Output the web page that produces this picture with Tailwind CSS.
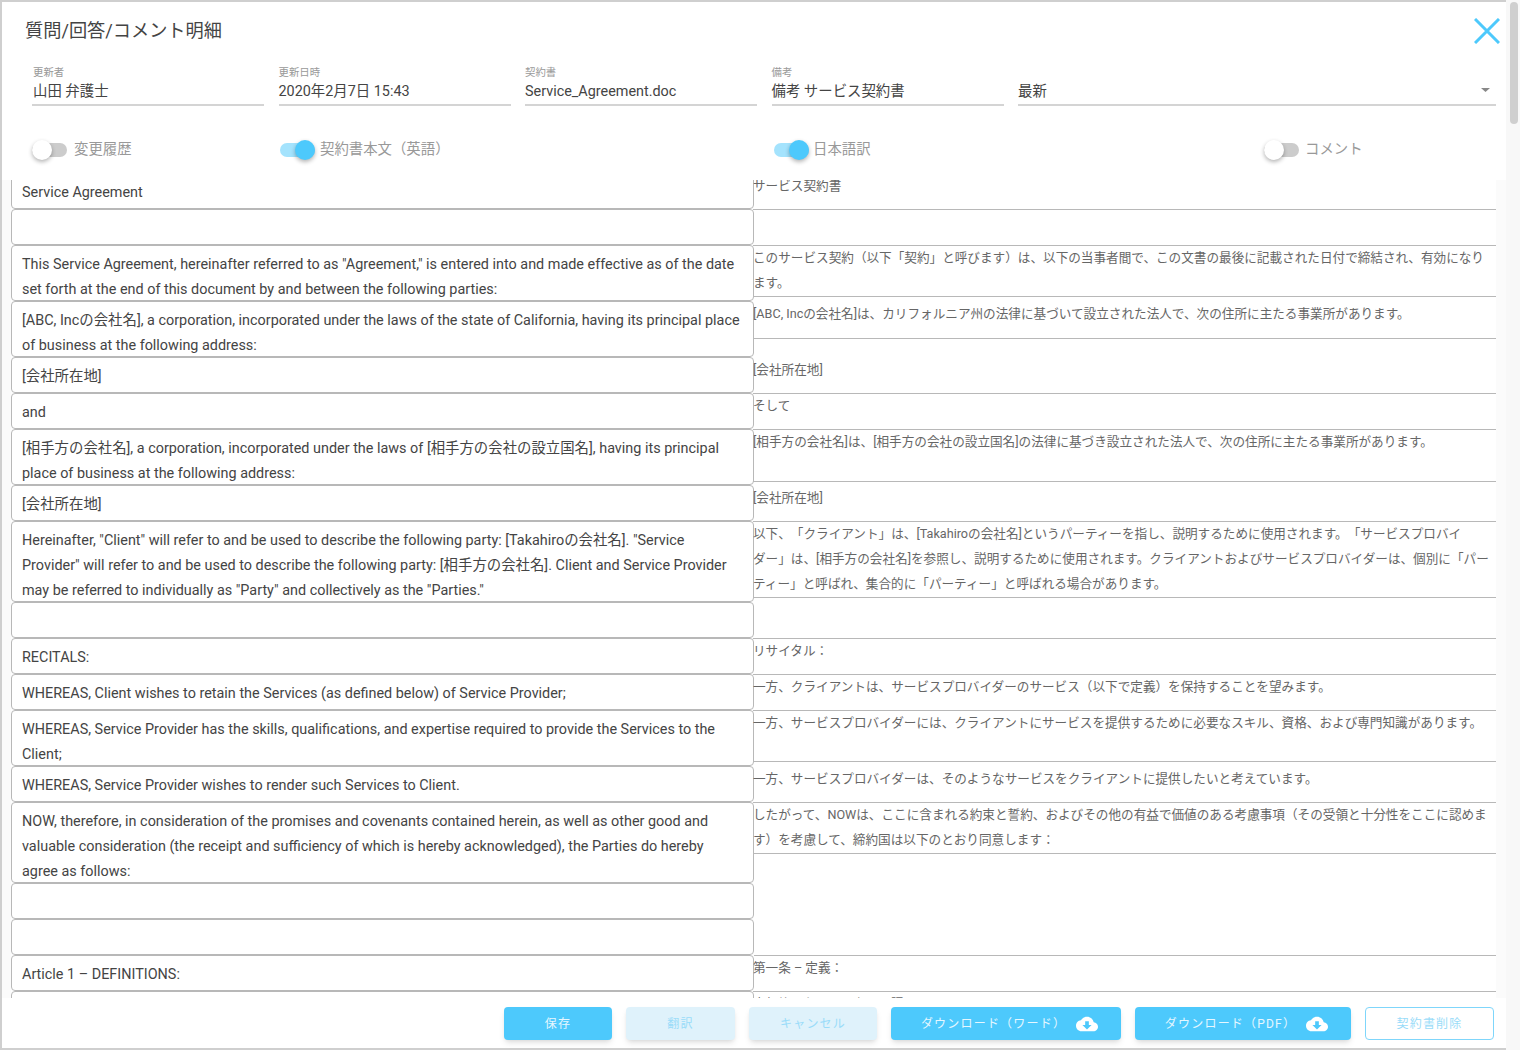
<!DOCTYPE html>
<html lang="ja">
<head>
    <meta charset="UTF-8">
    <title>質問/回答/コメント明細</title>
    <script src="https://cdn.jsdelivr.net/npm/@tailwindcss/browser@4"></script>
</head>
<body class="bg-white h-[1050px] overflow-hidden flex [text-spacing-trim:space-all] [line-break:strict] font-['Roboto','Noto_Sans_CJK_JP',sans-serif]">
<!-- ダイアログ本体 -->
<div class="w-[1506px] h-[1050px] flex flex-col border-l-2 border-t-2 border-b-2 border-[#cfcfcf] bg-white">
    <!-- タイトル -->
    <div class="h-[60px] shrink-0 flex justify-between pl-[23px] pr-[6px]">
        <h1 class="text-[18.2px] leading-[58px] text-[#444]">質問/回答/コメント明細</h1>
        <svg class="mt-[16px] w-[26px] h-[26px]" viewBox="0 0 26 26" fill="none" stroke="#4dc9fc" stroke-width="3"><path d="M1 1 25 25M25 1 1 25"/></svg>
    </div>

    <!-- 項目 -->
    <div class="h-[44px] shrink-0 flex gap-[14.5px] pl-[30px] pr-[10px]">
        <div class="w-[232px] pl-px border-b-2 border-[#d4d4d4]">
            <div class="text-[10.4px] leading-[16px] text-[#999] pt-[3px]">更新者</div>
            <div class="text-[14.4px] leading-[21px] text-[#444]">山田 弁護士</div>
        </div>
        <div class="w-[232px] border-b-2 border-[#d4d4d4]">
            <div class="text-[10.4px] leading-[16px] text-[#999] pt-[3px]">更新日時</div>
            <div class="text-[14.4px] leading-[21px] text-[#444]">2020年2月7日 15:43</div>
        </div>
        <div class="w-[232px] border-b-2 border-[#d4d4d4]">
            <div class="text-[10.4px] leading-[16px] text-[#999] pt-[3px]">契約書</div>
            <div class="text-[14.4px] leading-[21px] text-[#444]">Service_Agreement.doc</div>
        </div>
        <div class="w-[232px] border-b-2 border-[#d4d4d4]">
            <div class="text-[10.4px] leading-[16px] text-[#999] pt-[3px]">備考</div>
            <div class="text-[14.4px] leading-[21px] text-[#444]">備考 サービス契約書</div>
        </div>
        <div class="flex-1 border-b-2 border-[#d4d4d4] flex justify-between items-start pt-[19px]">
            <div class="text-[14.4px] leading-[21px] text-[#444]">最新</div>
            <svg class="mt-[7px] mr-[6px] w-[9px] h-[4px]" viewBox="0 0 9 4" fill="#888"><path d="M0 0h9L4.5 4z"/></svg>
        </div>
    </div>

    <!-- トグル -->
    <div class="h-[74px] shrink-0 flex items-center pl-[30px] pt-[14px]">
        <div class="w-[248px] flex items-center">
            <div class="relative w-[35px] h-[14px] rounded-full bg-[#cccccc]">
                <div class="absolute left-0 top-[-3px] w-[20px] h-[20px] rounded-full bg-white shadow-[0_2px_4px_rgba(0,0,0,0.3)]"></div>
            </div>
            <span class="ml-[7px] text-[14.4px] text-[#999]">変更履歴</span>
        </div>
        <div class="w-[494px] flex items-center">
            <div class="relative w-[35px] h-[14px] rounded-full bg-[#a4e3fd]">
                <div class="absolute right-0 top-[-3px] w-[20px] h-[20px] rounded-full bg-[#4dc9fc] shadow-[0_2px_4px_rgba(0,0,0,0.3)]"></div>
            </div>
            <span class="ml-[5px] text-[14.4px] text-[#999]">契約書本文（英語）</span>
        </div>
        <div class="w-[490px] flex items-center">
            <div class="relative w-[35px] h-[14px] rounded-full bg-[#a4e3fd]">
                <div class="absolute right-0 top-[-3px] w-[20px] h-[20px] rounded-full bg-[#4dc9fc] shadow-[0_2px_4px_rgba(0,0,0,0.3)]"></div>
            </div>
            <span class="ml-[4px] text-[14.4px] text-[#999]">日本語訳</span>
        </div>
        <div class="flex items-center">
            <div class="relative w-[35px] h-[14px] rounded-full bg-[#cccccc]">
                <div class="absolute left-0 top-[-3px] w-[20px] h-[20px] rounded-full bg-white shadow-[0_2px_4px_rgba(0,0,0,0.3)]"></div>
            </div>
            <span class="ml-[6px] text-[14.4px] text-[#999]">コメント</span>
        </div>
    </div>

    <!-- 本文（原文 / 翻訳） -->
    <div class="flex-1 min-h-0 overflow-hidden bg-[#fbfbfb] pl-[9px] pr-[10px]">
        <div class="-mt-[7px] bg-white text-[14.4px] leading-[25px] text-[#444]">
            <div class="flex h-9">
                <div class="w-[743px] border border-[#b8b8b8] rounded-[4px] px-[10px] pt-[6px]">Service Agreement</div>
                <div class="flex-1 -ml-px h-[37px] border-b border-[#b8b8b8] text-[12.62px] leading-[25px] text-[#666]">サービス契約書</div>
            </div>
            <div class="flex h-9">
                <div class="w-[743px] border border-[#b8b8b8] rounded-[4px] px-[10px] pt-[6px]"></div>
                <div class="flex-1 -ml-px h-[37px] border-b border-[#b8b8b8] text-[12.62px] leading-[25px] text-[#666]"></div>
            </div>
            <div class="flex h-14">
                <div class="w-[743px] border border-[#b8b8b8] rounded-[4px] px-[10px] pt-[6px]">This Service Agreement, hereinafter referred to as "Agreement," is entered into and made effective as of the date set forth at the end of this document by and between the following parties:</div>
                <div class="flex-1 -ml-px h-[52px] border-b border-[#b8b8b8] text-[12.62px] leading-[25px] text-[#666]">このサービス契約（以下「契約」と呼びます）は、以下の当事者間で、この文書の最後に記載された日付で締結され、有効になります。</div>
            </div>
            <div class="flex h-14">
                <div class="w-[743px] border border-[#b8b8b8] rounded-[4px] px-[10px] pt-[6px]">[ABC, Incの会社名], a corporation, incorporated under the laws of the state of California, having its principal place of business at the following address:</div>
                <div class="flex-1 -ml-px h-[38px] border-b border-[#b8b8b8] text-[12.62px] leading-[25px] text-[#666]">[ABC, Incの会社名]は、カリフォルニア州の法律に基づいて設立された法人で、次の住所に主たる事業所があります。</div>
            </div>
            <div class="flex h-9">
                <div class="w-[743px] border border-[#b8b8b8] rounded-[4px] px-[10px] pt-[6px]">[会社所在地]</div>
                <div class="flex-1 -ml-px h-[37px] border-b border-[#b8b8b8] text-[12.62px] leading-[25px] text-[#666]">[会社所在地]</div>
            </div>
            <div class="flex h-9">
                <div class="w-[743px] border border-[#b8b8b8] rounded-[4px] px-[10px] pt-[6px]">and</div>
                <div class="flex-1 -ml-px h-[37px] border-b border-[#b8b8b8] text-[12.62px] leading-[25px] text-[#666]">そして</div>
            </div>
            <div class="flex h-14">
                <div class="w-[743px] border border-[#b8b8b8] rounded-[4px] px-[10px] pt-[6px]">[相手方の会社名], a corporation, incorporated under the laws of [相手方の会社の設立国名], having its principal place of business at the following address:</div>
                <div class="flex-1 -ml-px h-[53px] border-b border-[#b8b8b8] text-[12.62px] leading-[25px] text-[#666]">[相手方の会社名]は、[相手方の会社の設立国名]の法律に基づき設立された法人で、次の住所に主たる事業所があります。</div>
            </div>
            <div class="flex h-9">
                <div class="w-[743px] border border-[#b8b8b8] rounded-[4px] px-[10px] pt-[6px]">[会社所在地]</div>
                <div class="flex-1 -ml-px h-[37px] border-b border-[#b8b8b8] text-[12.62px] leading-[25px] text-[#666]">[会社所在地]</div>
            </div>
            <div class="flex h-[81px]">
                <div class="w-[743px] border border-[#b8b8b8] rounded-[4px] px-[10px] pt-[6px]">Hereinafter, "Client" will refer to and be used to describe the following party: [Takahiroの会社名]. "Service Provider" will refer to and be used to describe the following party: [相手方の会社名]. Client and Service Provider may be referred to individually as "Party" and collectively as the "Parties."</div>
                <div class="flex-1 -ml-px h-[77px] border-b border-[#b8b8b8] text-[12.62px] leading-[25px] text-[#666]">以下、「クライアント」は、[Takahiroの会社名]というパーティーを指し、説明するために使用されます。「サービスプロバイダー」は、[相手方の会社名]を参照し、説明するために使用されます。クライアントおよびサービスプロバイダーは、個別に「パーティー」と呼ばれ、集合的に「パーティー」と呼ばれる場合があります。</div>
            </div>
            <div class="flex h-9">
                <div class="w-[743px] border border-[#b8b8b8] rounded-[4px] px-[10px] pt-[6px]"></div>
                <div class="flex-1 -ml-px h-[37px] border-b border-[#b8b8b8] text-[12.62px] leading-[25px] text-[#666]"></div>
            </div>
            <div class="flex h-9">
                <div class="w-[743px] border border-[#b8b8b8] rounded-[4px] px-[10px] pt-[6px]">RECITALS:</div>
                <div class="flex-1 -ml-px h-[37px] border-b border-[#b8b8b8] text-[12.62px] leading-[25px] text-[#666]">リサイタル：</div>
            </div>
            <div class="flex h-9">
                <div class="w-[743px] border border-[#b8b8b8] rounded-[4px] px-[10px] pt-[6px]">WHEREAS, Client wishes to retain the Services (as defined below) of Service Provider;</div>
                <div class="flex-1 -ml-px h-[37px] border-b border-[#b8b8b8] text-[12.62px] leading-[25px] text-[#666]">一方、クライアントは、サービスプロバイダーのサービス（以下で定義）を保持することを望みます。</div>
            </div>
            <div class="flex h-14">
                <div class="w-[743px] border border-[#b8b8b8] rounded-[4px] px-[10px] pt-[6px]">WHEREAS, Service Provider has the skills, qualifications, and expertise required to provide the Services to the Client;</div>
                <div class="flex-1 -ml-px h-[52px] border-b border-[#b8b8b8] text-[12.62px] leading-[25px] text-[#666]">一方、サービスプロバイダーには、クライアントにサービスを提供するために必要なスキル、資格、および専門知識があります。</div>
            </div>
            <div class="flex h-9">
                <div class="w-[743px] border border-[#b8b8b8] rounded-[4px] px-[10px] pt-[6px]">WHEREAS, Service Provider wishes to render such Services to Client.</div>
                <div class="flex-1 -ml-px h-[37px] border-b border-[#b8b8b8] text-[12.62px] leading-[25px] text-[#666]">一方、サービスプロバイダーは、そのようなサービスをクライアントに提供したいと考えています。</div>
            </div>
            <div class="flex h-[81px]">
                <div class="w-[743px] border border-[#b8b8b8] rounded-[4px] px-[10px] pt-[6px]">NOW, therefore, in consideration of the promises and covenants contained herein, as well as other good and valuable consideration (the receipt and sufficiency of which is hereby acknowledged), the Parties do hereby agree as follows:</div>
                <div class="flex-1 -ml-px h-[52px] border-b border-[#b8b8b8] text-[12.62px] leading-[25px] text-[#666]">したがって、NOWは、ここに含まれる約束と誓約、およびその他の有益で価値のある考慮事項（その受領と十分性をここに認めます）を考慮して、締約国は以下のとおり同意します：</div>
            </div>
            <div class="flex h-9">
                <div class="w-[743px] border border-[#b8b8b8] rounded-[4px] px-[10px] pt-[6px]"></div>
                <div class="flex-1 h-9"></div>
            </div>
            <div class="flex h-9">
                <div class="w-[743px] border border-[#b8b8b8] rounded-[4px] px-[10px] pt-[6px]"></div>
                <div class="flex-1 h-[37px] border-b border-[#b8b8b8]"></div>
            </div>
            <div class="flex h-9">
                <div class="w-[743px] border border-[#b8b8b8] rounded-[4px] px-[10px] pt-[6px]">Article 1 – DEFINITIONS:</div>
                <div class="flex-1 -ml-px h-[37px] border-b border-[#b8b8b8] text-[12.62px] leading-[25px] text-[#666]">第一条 – 定義：</div>
            </div>
            <div class="flex h-9">
                <div class="w-[743px] border border-[#b8b8b8] rounded-[4px] px-[10px] pt-[6px]"></div>
                <div class="flex-1 -ml-px h-[37px] border-b border-[#b8b8b8] text-[12.62px] leading-[25px] text-[#666]">本契約において、次の用語は</div>
            </div>
        </div>
    </div>

    <!-- ボタン -->
    <div class="h-[50px] shrink-0 bg-white flex justify-end gap-[14px] pt-[9px] pr-[12px] text-[12px] tracking-[1.2px]">
        <button class="w-[108px] h-[33px] rounded-[4px] bg-[#4dc9fc] text-[#e6f7ff] shadow-md">保存</button>
        <button class="w-[109px] h-[33px] rounded-[4px] bg-[#dff2fb] text-[#9adcf9] shadow-md">翻訳</button>
        <button class="w-[128px] h-[33px] rounded-[4px] bg-[#dff2fb] text-[#9adcf9] shadow-md">キャンセル</button>
        <button class="w-[230px] h-[33px] pl-[7px] rounded-[4px] bg-[#4dc9fc] text-[#e6f7ff] shadow-md flex items-center justify-center gap-[10px]">
            ダウンロード（ワード）
            <svg class="w-[22px] h-[22px]" viewBox="0 0 24 24" fill="#fff"><path d="M19.35 10.04C18.67 6.59 15.64 4 12 4 9.11 4 6.6 5.64 5.35 8.04 2.34 8.36 0 10.91 0 14c0 3.31 2.69 6 6 6h13c2.76 0 5-2.24 5-5 0-2.64-2.05-4.78-4.65-4.96zM17 13l-5 5-5-5h3V9h4v4h3z"/></svg>
        </button>
        <button class="w-[216px] h-[33px] pl-[7px] rounded-[4px] bg-[#4dc9fc] text-[#e6f7ff] shadow-md flex items-center justify-center gap-[10px]">
            ダウンロード（PDF）
            <svg class="w-[22px] h-[22px]" viewBox="0 0 24 24" fill="#fff"><path d="M19.35 10.04C18.67 6.59 15.64 4 12 4 9.11 4 6.6 5.64 5.35 8.04 2.34 8.36 0 10.91 0 14c0 3.31 2.69 6 6 6h13c2.76 0 5-2.24 5-5 0-2.64-2.05-4.78-4.65-4.96zM17 13l-5 5-5-5h3V9h4v4h3z"/></svg>
        </button>
        <button class="w-[129px] h-[33px] rounded-[4px] border border-[#7fd6fb] bg-white text-[#9adcf9]">契約書削除</button>
    </div>
</div>

<!-- スクロールバー -->
<div class="flex-1 h-[1050px] bg-[#f8f8f8] pl-[4px] pr-[2px] pt-[2px]">
    <div class="w-[8px] h-[122px] rounded-full bg-[#cfcfcf]"></div>
</div>
</body>
</html>
